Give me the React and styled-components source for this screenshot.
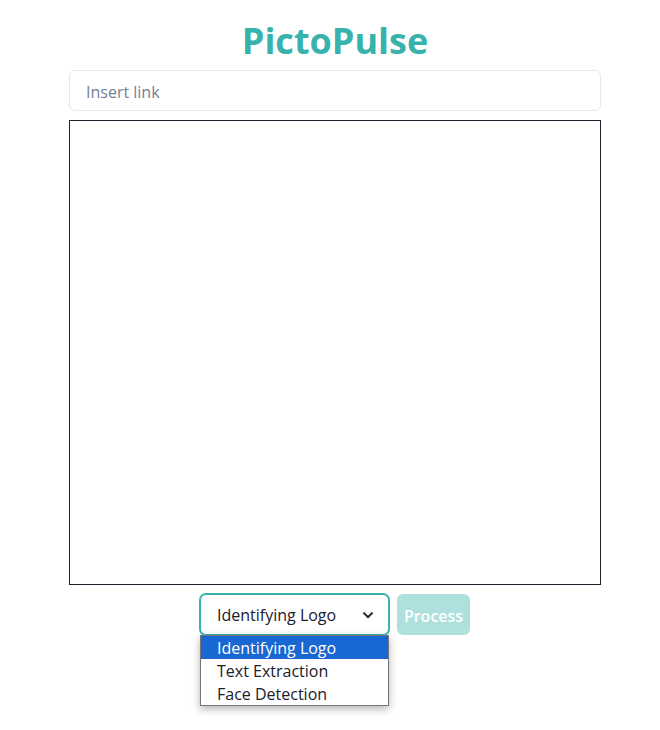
import React, { useState } from "react";
import styled, { createGlobalStyle } from "styled-components";

const GlobalStyle = createGlobalStyle`
  *, *::before, *::after { box-sizing: border-box; }
  body {
    margin: 0;
    background: #ffffff;
    color: #1a202c;
    font-family: "Open Sans", "Noto Sans", sans-serif;
    font-size: 16px;
  }
  button, input, select { font: inherit; color: inherit; }
`;

const Page = styled.main`
  display: flex;
  flex-direction: column;
  gap: 9px;
  min-height: 100vh;
  padding: 14px 59px 24px 69px;
`;

const Title = styled.h1`
  margin: 0 0 -7px;
  color: #38b2ac;
  font-size: 36px;
  font-weight: 700;
  line-height: 54px;
  text-align: center;
`;

const LinkInput = styled.input`
  width: 100%;
  height: 41px;
  padding: 2px 16px 0;
  border: 1px solid #e2e8f0;
  border-radius: 6px;
  background: #ffffff;
  outline: none;
  &::placeholder { color: #718096; opacity: 1; }
`;

const Preview = styled.section`
  height: 465px;
  border: 1px solid #1a202c;
`;

const Controls = styled.form`
  display: flex;
  justify-content: center;
  gap: 8px;
`;

const SelectWrap = styled.div`
  position: relative;
  width: 189px;
  height: 41px;
`;

const Select = styled.select`
  width: 100%;
  height: 41px;
  padding: 0 32px 0 16px;
  appearance: none;
  border: 1px solid #38b2ac;
  border-radius: 6px;
  box-shadow: 0 0 0 1px #38b2ac;
  background: #ffffff;
  outline: none;
`;

const Chevron = styled.svg`
  position: absolute;
  top: 11px;
  right: 11px;
  width: 20px;
  height: 20px;
  fill: currentColor;
  stroke: currentColor;
  stroke-width: 0.6;
  pointer-events: none;
`;

const Menu = styled.ul`
  position: absolute;
  top: 100%;
  left: 0;
  width: 100%;
  margin: 0;
  padding: 0;
  list-style: none;
  border: 1px solid #767676;
  background: #ffffff;
  box-shadow: 0 3px 8px rgba(0, 0, 0, 0.3);
`;

const MenuItem = styled.li`
  height: 23px;
  padding-left: 16px;
  line-height: 25px;
  cursor: default;
  color: ${({ $active }) => ($active ? "#ffffff" : "#1a202c")};
  background: ${({ $active }) => ($active ? "#1967d2" : "transparent")};
`;

const ProcessButton = styled.button`
  width: 73px;
  height: 41px;
  padding: 3px 0 0;
  border: 0;
  border-radius: 6px;
  background: #38b2ac;
  color: #ffffff;
  font-weight: 600;
  opacity: 0.4;
`;

const MODES = ["Identifying Logo", "Text Extraction", "Face Detection"];

export default function App() {
  const [link, setLink] = useState("");
  const [mode, setMode] = useState(MODES[0]);

  return (
    <>
      <GlobalStyle />
      <Page>
        <Title>PictoPulse</Title>
        <LinkInput
          type="url"
          aria-label="Insert link"
          placeholder="Insert link"
          value={link}
          onChange={(event) => setLink(event.target.value)}
        />
        <Preview aria-label="Preview" />
        <Controls onSubmit={(event) => event.preventDefault()}>
          <SelectWrap>
            <Select
              aria-label="Mode"
              value={mode}
              onChange={(event) => setMode(event.target.value)}
            >
              {MODES.map((name) => (
                <option key={name}>{name}</option>
              ))}
            </Select>
            <Chevron viewBox="0 0 24 24" aria-hidden="true">
              <path d="M16.59 8.59L12 13.17 7.41 8.59 6 10l6 6 6-6z" />
            </Chevron>
            <Menu role="listbox" aria-label="Mode options">
              {MODES.map((name) => (
                <MenuItem
                  key={name}
                  role="option"
                  aria-selected={name === mode}
                  $active={name === mode}
                  onClick={() => setMode(name)}
                >
                  {name}
                </MenuItem>
              ))}
            </Menu>
          </SelectWrap>
          <ProcessButton type="submit" disabled={!link}>Process</ProcessButton>
        </Controls>
      </Page>
    </>
  );
}
